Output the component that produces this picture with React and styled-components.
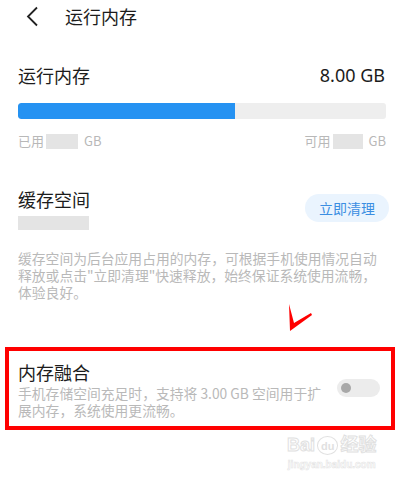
import styled, { createGlobalStyle } from "styled-components";

const GlobalStyle = createGlobalStyle`
  body {
    margin: 0;
    background: #fff;
    font-family: "Noto Sans CJK SC", "Noto Sans", sans-serif;
  }
`;

const App = () => {
  return (
    <Page>
      <GlobalStyle />
      <Header>
        <BackIcon width="13" height="21" viewBox="0 0 13 21">
          <path d="M11 1.5 L2 10.5 L11 19.5" fill="none" stroke="#222" strokeWidth="1.8" />
        </BackIcon>
        <HeaderTitle>运行内存</HeaderTitle>
      </Header>

      <Section>
        <Row>
          <Title>运行内存</Title>
          <Value>8.00 GB</Value>
        </Row>
        <Bar>
          <BarFill style={{ width: "59%" }} />
        </Bar>
        <UsageRow>
          <Usage>已用<Blank $w={32} />GB</Usage>
          <Usage>可用<Blank $w={30} />GB</Usage>
        </UsageRow>
      </Section>

      <CacheSection>
        <CacheRow>
          <div>
            <Title>缓存空间</Title>
            <Blank $w={71} $h={14} $block />
          </div>
          <CleanButton>立即清理</CleanButton>
        </CacheRow>
        <Desc>
          缓存空间为后台应用占用的内存，可根据手机使用情况自动释放或点击"立即清理"快速释放，始终保证系统使用流畅，体验良好。
        </Desc>
      </CacheSection>

      <Arrow width="26" height="28" viewBox="0 0 26 28">
        <path d="M2 0 L7 19 L24 9 L25 11 L3 27 Z" fill="#f00" />
      </Arrow>

      <Highlight>
        <FusionRow>
          <FusionText>
            <Title>内存融合</Title>
            <FusionDesc>手机存储空间充足时，支持将 3.00 GB 空间用于扩展内存，系统使用更流畅。</FusionDesc>
          </FusionText>
          <Toggle>
            <Knob />
          </Toggle>
        </FusionRow>
      </Highlight>

      <Watermark>
        <Brand>
          <Outline>Bai</Outline>
          <Paw>du</Paw>
          <Outline>经验</Outline>
        </Brand>
        <Site>jingyan.baidu.com</Site>
      </Watermark>
    </Page>
  );
};

const Page = styled.div`
  position: relative;
  width: 404px;
  height: 485px;
  overflow: hidden;
  background: #fff;
`;

const Header = styled.div`
  height: 32px;
  display: flex;
  align-items: center;
  padding-left: 26px;
  gap: 26px;
`;

const BackIcon = styled.svg`
  display: block;
`;

const HeaderTitle = styled.div`
  font-size: 18px;
  color: #1c1c1c;
  line-height: 24px;
`;

const Section = styled.div`
  padding: 0 18px;
  margin-top: 32px;
`;

const Row = styled.div`
  display: flex;
  justify-content: space-between;
  align-items: center;
`;

const Title = styled.div`
  font-size: 18px;
  line-height: 22px;
  color: #1c1c1c;
`;

const Value = styled.div`
  font-size: 18px;
  line-height: 22px;
  color: #1c1c1c;
  padding-right: 1px;
  font-family: "Noto Sans", sans-serif;
`;

const Bar = styled.div`
  margin-top: 17px;
  height: 16px;
  border-radius: 3px;
  background: #eeeeee;
  overflow: hidden;
`;

const BarFill = styled.div`
  height: 100%;
  background: #2592f2;
  border-radius: 3px 0 0 3px;
`;

const UsageRow = styled.div`
  margin-top: 13px;
  display: flex;
  justify-content: space-between;
`;

const Usage = styled.div`
  display: flex;
  align-items: center;
  font-size: 13px;
  line-height: 18px;
  color: #b8b8b8;
`;

const Blank = styled.span`
  display: ${(p) => (p.$block ? "block" : "inline-block")};
  width: ${(p) => p.$w}px;
  height: ${(p) => p.$h || 15}px;
  background: #e4e4e4;
  margin: ${(p) => (p.$block ? "6px 0 0" : "0 6px 0 2px")};
`;

const CacheSection = styled.div`
  padding: 0 18px;
  margin-top: 38px;
`;

const CacheRow = styled.div`
  display: flex;
  justify-content: space-between;
  align-items: flex-start;
`;

const CleanButton = styled.div`
  margin-top: 6px;
  margin-right: -3px;
  width: 84px;
  height: 28px;
  border-radius: 14px;
  background: #eaf4fe;
  color: #3b8ee2;
  font-size: 14px;
  display: flex;
  align-items: center;
  justify-content: center;
`;

const Desc = styled.div`
  margin-top: 20px;
  font-size: 13.8px;
  line-height: 17px;
  color: #b9b9b9;
`;

const Arrow = styled.svg`
  position: absolute;
  left: 287px;
  top: 304px;
`;

const Highlight = styled.div`
  margin: 46px 9px 0 5px;
  border: 4px solid #ff0000;
  padding: 10px 11px 7px 9px;
`;

const FusionRow = styled.div`
  display: flex;
  align-items: center;
  gap: 10px;
`;

const FusionText = styled.div`
  flex: 1;
`;

const FusionDesc = styled.div`
  margin-top: 2px;
  font-size: 13.8px;
  line-height: 17px;
  color: #b9b9b9;
`;

const Toggle = styled.div`
  margin-top: -4px;
  width: 43px;
  height: 18px;
  border-radius: 9px;
  background: #ececec;
  display: flex;
  align-items: center;
  padding-left: 4px;
  box-sizing: border-box;
  flex-shrink: 0;
`;

const Knob = styled.div`
  width: 10px;
  height: 10px;
  border-radius: 50%;
  background: #a8a8a8;
`;

const Watermark = styled.div`
  position: absolute;
  left: 287px;
  top: 430px;
  display: flex;
  flex-direction: column;
  align-items: center;
  opacity: 0.55;
`;

const Brand = styled.div`
  display: flex;
  align-items: flex-end;
  gap: 2px;
`;

const Outline = styled.span`
  font-family: "Liberation Sans", "Noto Sans CJK SC", sans-serif;
  font-weight: bold;
  font-size: 18px;
  color: #fff;
  -webkit-text-stroke: 1px #c8c8c8;
`;

const Paw = styled.span`
  font-family: "Liberation Sans", sans-serif;
  font-weight: bold;
  font-size: 11px;
  color: #c8c8c8;
  border: 1.5px solid #c8c8c8;
  border-radius: 50%;
  padding: 3px 3px 2px;
  margin-bottom: 1px;
`;

const Site = styled.div`
  font-family: "Liberation Sans", sans-serif;
  font-weight: bold;
  font-size: 10px;
  color: #fff;
  -webkit-text-stroke: 0.6px #cfcfcf;
  margin-top: 3px;
`;

export default App;
